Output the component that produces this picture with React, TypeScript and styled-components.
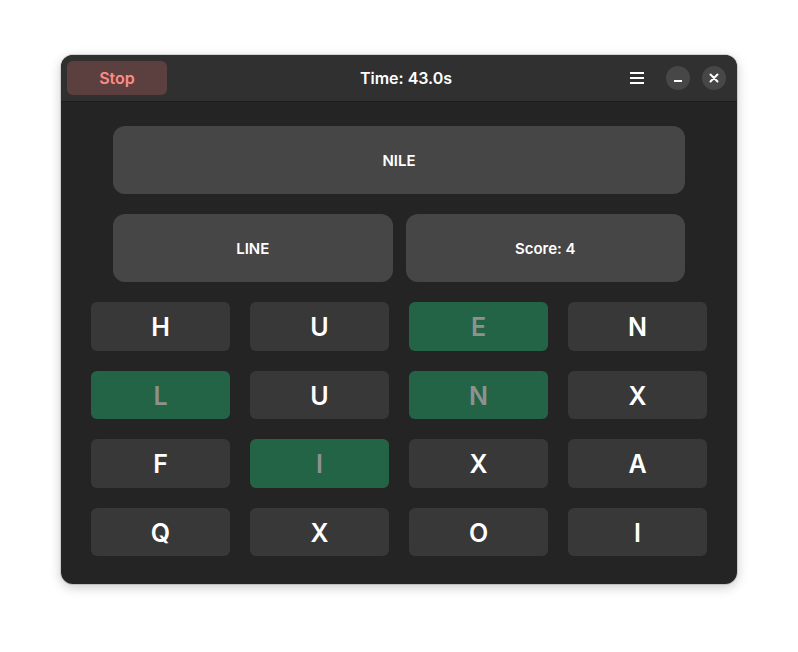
import React from "react";
import styled, { createGlobalStyle } from "styled-components";

const GlobalStyle = createGlobalStyle`
    html, body {
        margin: 0;
        padding: 0;
        background: #ffffff;
    }
    body {
        font-family: Inter, "Noto Sans", sans-serif;
    }
`;

const Desktop = styled.div`
    width: 798px;
    height: 652px;
    padding: 55px 0 0 61px;
    box-sizing: border-box;
`;

const Window = styled.div`
    width: 676px;
    height: 529px;
    border-radius: 12px;
    background: #242424;
    overflow: hidden;
    display: flex;
    flex-direction: column;
    box-shadow: 0 3px 12px rgba(0, 0, 0, 0.22), 0 0 0 1px rgba(0, 0, 0, 0.12);
`;

const HeaderBar = styled.div`
    height: 46px;
    flex-shrink: 0;
    background: #303030;
    border-bottom: 1px solid #1e1e1e;
    display: flex;
    align-items: center;
    padding: 0 11px 0 6px;
    position: relative;
`;

const StopButton = styled.button`
    width: 100px;
    height: 34px;
    border: none;
    border-radius: 6px;
    background: #5c4040;
    color: #ff8a84;
    font-family: inherit;
    font-size: 16px;
    font-weight: 600;
    cursor: pointer;
`;

const Title = styled.div`
    position: absolute;
    left: 14px;
    right: 0;
    text-align: center;
    color: #ffffff;
    font-size: 16px;
    font-weight: 600;
    pointer-events: none;
`;

const HeaderEnd = styled.div`
    margin-left: auto;
    display: flex;
    align-items: center;
    gap: 12px;
`;

const MenuButton = styled.button`
    width: 34px;
    height: 34px;
    border: none;
    background: transparent;
    display: flex;
    align-items: center;
    justify-content: center;
    padding: 0;
`;

const CircleButton = styled.button`
    width: 24px;
    height: 24px;
    border-radius: 50%;
    border: none;
    background: #474747;
    display: flex;
    align-items: center;
    justify-content: center;
    padding: 0;
`;

const Content = styled.div`
    flex: 1;
    padding: 24px 30px 0;
    display: flex;
    flex-direction: column;
`;

const Cards = styled.div`
    padding: 0 22px;
    display: grid;
    grid-template-columns: 1fr 1fr;
    gap: 20px 13px;
    margin-bottom: 20px;
`;

const Card = styled.div<{ wide?: boolean }>`
    grid-column: ${({ wide }) => (wide ? "1 / span 2" : "auto")};
    height: 68px;
    border-radius: 12px;
    background: #464646;
    color: #ffffff;
    font-size: 15px;
    font-weight: 600;
    display: flex;
    align-items: center;
    justify-content: center;
`;

const LetterGrid = styled.div`
    display: grid;
    grid-template-columns: repeat(4, 139px);
    grid-template-rows: repeat(4, 48.5px);
    gap: 20px 20px;
`;

const Letter = styled.div<{ picked: boolean }>`
    border-radius: 6px;
    background: ${({ picked }) => (picked ? "#246446" : "#383838")};
    color: ${({ picked }) => (picked ? "#8e928f" : "#ffffff")};
    font-size: 25px;
    font-weight: 600;
    padding-top: 2px;
    box-sizing: border-box;
    display: flex;
    align-items: center;
    justify-content: center;
`;

const letters: { ch: string; picked: boolean }[] = [
    { ch: "H", picked: false },
    { ch: "U", picked: false },
    { ch: "E", picked: true },
    { ch: "N", picked: false },
    { ch: "L", picked: true },
    { ch: "U", picked: false },
    { ch: "N", picked: true },
    { ch: "X", picked: false },
    { ch: "F", picked: false },
    { ch: "I", picked: true },
    { ch: "X", picked: false },
    { ch: "A", picked: false },
    { ch: "Q", picked: false },
    { ch: "X", picked: false },
    { ch: "O", picked: false },
    { ch: "I", picked: false },
];

export default function App() {
    return (
        <>
            <GlobalStyle />
            <Desktop>
                <Window>
                    <HeaderBar>
                        <StopButton>Stop</StopButton>
                        <Title>Time: 43.0s</Title>
                        <HeaderEnd>
                            <MenuButton>
                                <svg width="16" height="16" viewBox="0 0 16 16">
                                    <rect x="1" y="2" width="14" height="2" fill="#ffffff" />
                                    <rect x="1" y="7" width="14" height="2" fill="#ffffff" />
                                    <rect x="1" y="12" width="14" height="2" fill="#ffffff" />
                                </svg>
                            </MenuButton>
                            <CircleButton>
                                <svg width="16" height="16" viewBox="0 0 16 16">
                                    <rect x="4" y="10" width="8" height="2" fill="#ffffff" />
                                </svg>
                            </CircleButton>
                            <CircleButton>
                                <svg width="16" height="16" viewBox="0 0 16 16">
                                    <path d="M4.5 4.5 L11.5 11.5 M11.5 4.5 L4.5 11.5" stroke="#ffffff" strokeWidth="2" strokeLinecap="round" />
                                </svg>
                            </CircleButton>
                        </HeaderEnd>
                    </HeaderBar>
                    <Content>
                        <Cards>
                            <Card wide>NILE</Card>
                            <Card>LINE</Card>
                            <Card>Score: 4</Card>
                        </Cards>
                        <LetterGrid>
                            {letters.map((l, i) => (
                                <Letter key={i} picked={l.picked}>{l.ch}</Letter>
                            ))}
                        </LetterGrid>
                    </Content>
                </Window>
            </Desktop>
        </>
    );
}
